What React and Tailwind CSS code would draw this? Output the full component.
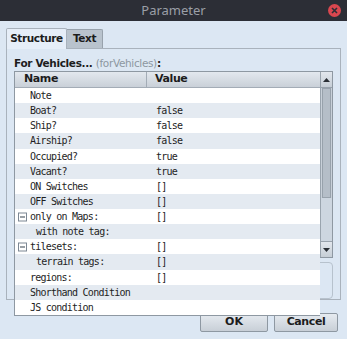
import React from "react";

const rows = [
  { name: "Note", value: "", indent: 0, tog: false },
  { name: "Boat?", value: "false", indent: 0 },
  { name: "Ship?", value: "false", indent: 0 },
  { name: "Airship?", value: "false", indent: 0 },
  { name: "Occupied?", value: "true", indent: 0 },
  { name: "Vacant?", value: "true", indent: 0 },
  { name: "ON Switches", value: "[]", indent: 0 },
  { name: "OFF Switches", value: "[]", indent: 0 },
  { name: "only on Maps:", value: "[]", indent: 0, tog: true },
  { name: "with note tag:", value: "", indent: 1 },
  { name: "tilesets:", value: "[]", indent: 0, tog: true },
  { name: "terrain tags:", value: "[]", indent: 1 },
  { name: "regions:", value: "[]", indent: 0 },
  { name: "Shorthand Condition", value: "", indent: 0 },
  { name: "JS condition", value: "", indent: 0 },
];

const mono = { fontFamily: '"DejaVu Sans Mono", monospace' };

function Toggle() {
  return (
    <span className="absolute left-[3px] top-1/2 -translate-y-1/2 w-[9px] h-[9px] border border-[#7d8894] bg-white flex items-center justify-center">
      <span className="w-[5px] h-px bg-[#33404d]" />
    </span>
  );
}

export default function App() {
  return (
    <div
      className="w-[347px] h-[339px] bg-[#dce7f3] overflow-hidden flex flex-col"
      style={{ fontFamily: '"DejaVu Sans", sans-serif' }}
    >
      <div className="h-[21px] shrink-0 bg-[#2c2e36] relative flex items-center justify-center">
        <span className="text-[13px] text-[#9b9fa7]" style={{ fontFamily: '"Noto Sans", sans-serif' }}>
          Parameter
        </span>
        <span className="absolute right-[6px] top-[4px] w-[13px] h-[13px] rounded-full bg-[#d9474f] flex items-center justify-center">
          <svg width="7" height="7" viewBox="0 0 7 7">
            <path d="M1 1L6 6M6 1L1 6" stroke="#2c2e36" strokeWidth="1.6" />
          </svg>
        </span>
      </div>

      <div className="px-[6px] pt-[7px] flex flex-col">
        <div className="flex items-end h-[20px]">
          <div className="h-[21px] w-[61px] bg-[#e6eef8] border border-b-0 border-[#a9b2bc] rounded-t-[2px] flex items-center justify-center text-[10.5px] font-bold text-[#1c1c1c] tracking-[-0.4px] relative top-px">
            Structure
          </div>
          <div className="h-[19px] w-[36px] bg-[#b9c3cd] border border-l-0 border-b-0 border-[#98a2ac] rounded-tr-[2px] flex items-center justify-center text-[10.5px] font-bold text-[#1c1c1c] tracking-[-0.4px]">
            Text
          </div>
        </div>
        <div className="h-[252px] border border-[#a9b2bc] bg-[#dce7f3] px-[7px] pt-[8px] flex flex-col">
          <div className="text-[10.5px] font-bold text-[#1c1c1c] tracking-[-0.35px] leading-[13px] h-[14px]">
            For Vehicles... <span className="text-[#8d97a1] font-normal">(forVehicles)</span>:
          </div>
          <div className="h-[187px] border border-[#8e98a2] flex relative z-10">
            <div className="w-[306px] shrink-0 flex flex-col self-start bg-white border-b border-[#8e98a2] -ml-px border-l">
              <div className="h-[17px] flex bg-gradient-to-b from-[#e3e8ee] to-[#c9d0d8] border-b border-[#a3acb6] text-[11px] font-bold text-[#1c1c1c] tracking-[-0.4px] -mt-px border-t border-t-[#8e98a2]">
                <div className="w-[132px] border-r border-[#a3acb6] pl-[9px] flex items-center">Name</div>
                <div className="flex-1 pl-[8px] flex items-center">Value</div>
              </div>
              {rows.map((r, i) => (
                <div
                  key={i}
                  className={`h-[15.13px] flex items-center text-[10px] text-[#1e1e1e] tracking-[-0.76px] ${
                    i % 2 === 1 ? "bg-[#e4eaf1]" : "bg-white"
                  }`}
                  style={mono}
                >
                  <div className="w-[132px] relative h-full flex items-center">
                    {r.tog && <Toggle />}
                    <span className={r.indent ? "pl-[21px]" : "pl-[15px]"}>{r.name}</span>
                  </div>
                  <div className="pl-[9px]">{r.value}</div>
                </div>
              ))}
            </div>
            <div className="flex-1 flex flex-col bg-[#c8d0d9] border-l border-[#9aa4ae]">
              <div className="h-[16px] bg-gradient-to-b from-[#e2e7ed] to-[#c6ced6] border-b border-[#98a2ac] flex items-center justify-center">
                <svg width="7" height="4" viewBox="0 0 7 4"><path d="M0 4L3.5 0L7 4Z" fill="#2a2f35" /></svg>
              </div>
              <div className="h-[110px] mx-px bg-[#b5bec8] border border-[#98a2ac]" />
              <div className="flex-1 bg-[#cdd6e0]" />
              <div className="h-[16px] bg-gradient-to-b from-[#e2e7ed] to-[#c6ced6] border-t border-[#98a2ac] flex items-center justify-center">
                <svg width="7" height="4" viewBox="0 0 7 4"><path d="M0 0L3.5 4L7 0Z" fill="#2a2f35" /></svg>
              </div>
            </div>
          </div>
          <div className="mt-[4px] h-[37px] border border-[#b7c2cd] rounded-[4px] bg-[#dce7f3]" />
        </div>
        <div className="flex justify-end gap-[6px] mt-[13px] pr-[3px]">
          <button className="w-[68px] h-[19px] border border-[#8e98a2] rounded-[2px] bg-gradient-to-b from-[#e6ebf0] to-[#c8cfd7] text-[11px] font-bold text-[#1c1c1c]">
            OK
          </button>
          <button className="w-[64px] h-[19px] border border-[#8e98a2] rounded-[2px] bg-gradient-to-b from-[#e6ebf0] to-[#c8cfd7] text-[11px] font-bold text-[#1c1c1c] tracking-[-0.4px]">
            Cancel
          </button>
        </div>
      </div>
    </div>
  );
}
